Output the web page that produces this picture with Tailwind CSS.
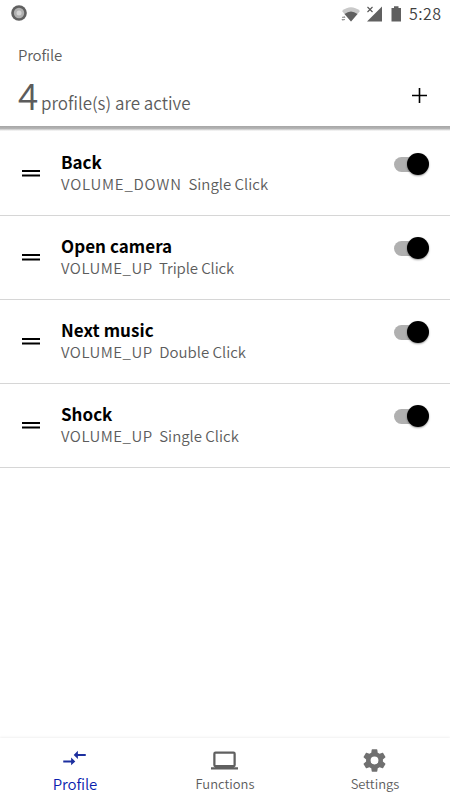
<!DOCTYPE html>
<html lang="en">
<head>
<meta charset="utf-8">
<title>Profile</title>
<script src="https://cdn.jsdelivr.net/npm/@tailwindcss/browser@4"></script>
</head>
<body class="bg-white">
<div class="flex h-[800px] w-[450px] flex-col overflow-hidden bg-white font-['Noto_Sans_CJK_SC','Noto_Sans',sans-serif] text-[#5c5c5c]">
  <div class="flex h-[27px] shrink-0 items-center justify-between pl-[11px] pr-[9px]">
    <svg class="-mt-px size-4" viewBox="0 0 16 16"><circle cx="8" cy="8" r="7.8" fill="#606060"/><circle cx="8" cy="8" r="5.2" fill="#b0b0b0"/><circle cx="8" cy="8" r="2.5" fill="#d4d4d4"/></svg>
    <div class="flex items-center">
      <svg class="h-5 w-[68px]" viewBox="0 0 68 20"><path d="M1 7Q10 -.5 19 7L10 17.500Z" fill="#c9c9c9"/><path d="M3.500 10Q10 5 16.500 10L10 17.500Z" fill="#606060"/><path d="M1 13.300h3l-1-1M4 15.600H1l1 1" fill="none" stroke="#707070" stroke-width=".8"/><path d="M41 2.500V17.500H26Z" fill="#606060"/><path d="M25 2h8v7h-8Z" fill="#fff"/><path d="m26.500 3 5 5m0-5-5 5" stroke="#555" stroke-width="1.100"/><path d="M50.500 4h2.500V2.200h4.500V4H60v13.500h-9.500Z" fill="#606060"/></svg>
      <span class="-mt-[2px] w-[32px] text-[16px] leading-[26px] font-[350] tracking-[0.500px] whitespace-nowrap text-[#404040]">5:28</span>
    </div>
  </div>
  <header class="h-[99px] shrink-0 px-[18px]">
    <h1 class="pt-[16px] text-[15px] leading-6 font-[350] -tracking-[0.150px]">Profile</h1>
    <div class="-mt-px flex items-center justify-between">
      <p class="flex items-baseline whitespace-nowrap"><span class="w-[23px] text-[37px] leading-[56px] font-[350]">4</span><span class="text-[17px] font-[350]">profile(s) are active</span></p>
      <svg class="mt-[2px] mr-[4px] size-[17px]" viewBox="0 0 17 17"><path d="M8.500 1v15M1 8.500h15" stroke="#000" stroke-width="1.600"/></svg>
    </div>
  </header>
  <div class="h-[5px] shrink-0 bg-linear-to-b from-[#a6a6a6] via-[#b4b4b4] to-white"></div>
  <main class="flex-1 pt-px">
    <section class="flex h-[84px] border-b border-[#d6d6d6] pl-[22px] pr-[20px]">
      <svg class="mt-[37px] h-[9px] w-[18px]" viewBox="0 0 18 9"><path d="M0 2h18M0 6.500h18" stroke="#000" stroke-width="2"/></svg>
      <div class="ml-[21px] flex-1 pt-[19px] whitespace-nowrap"><h2 class="text-[17px] leading-[22px] font-bold text-black">Back</h2><p class="text-[15px] leading-[22px] font-[350]"><span class="tracking-[0.800px]">VOLUME_DOWN</span>&nbsp; Single Click</p></div>
      <div class="relative mt-[21px] h-[24px] w-[36px]"><div class="mt-[4px] h-[15px] w-[30px] rounded-full bg-[#b0b0b0]"></div><div class="absolute top-0 right-[1px] size-[22px] rounded-full bg-black shadow-[0_1px_2px_#0006]"></div></div>
    </section>
    <section class="flex h-[84px] border-b border-[#d6d6d6] pl-[22px] pr-[20px]">
      <svg class="mt-[37px] h-[9px] w-[18px]" viewBox="0 0 18 9"><path d="M0 2h18M0 6.500h18" stroke="#000" stroke-width="2"/></svg>
      <div class="ml-[21px] flex-1 pt-[19px] whitespace-nowrap"><h2 class="text-[17px] leading-[22px] font-bold tracking-[0.050px] text-black">Open camera</h2><p class="text-[15px] leading-[22px] font-[350] -tracking-[0.100px]"><span class="tracking-[0.500px]">VOLUME_UP</span>&nbsp; Triple Click</p></div>
      <div class="relative mt-[21px] h-[24px] w-[36px]"><div class="mt-[4px] h-[15px] w-[30px] rounded-full bg-[#b0b0b0]"></div><div class="absolute top-0 right-[1px] size-[22px] rounded-full bg-black shadow-[0_1px_2px_#0006]"></div></div>
    </section>
    <section class="flex h-[84px] border-b border-[#d6d6d6] pl-[22px] pr-[20px]">
      <svg class="mt-[37px] h-[9px] w-[18px]" viewBox="0 0 18 9"><path d="M0 2h18M0 6.500h18" stroke="#000" stroke-width="2"/></svg>
      <div class="ml-[21px] flex-1 pt-[19px] whitespace-nowrap"><h2 class="text-[17px] leading-[22px] font-bold tracking-[0.050px] text-black">Next music</h2><p class="text-[15px] leading-[22px] font-[350]"><span class="tracking-[0.500px]">VOLUME_UP</span>&nbsp; Double Click</p></div>
      <div class="relative mt-[21px] h-[24px] w-[36px]"><div class="mt-[4px] h-[15px] w-[30px] rounded-full bg-[#b0b0b0]"></div><div class="absolute top-0 right-[1px] size-[22px] rounded-full bg-black shadow-[0_1px_2px_#0006]"></div></div>
    </section>
    <section class="flex h-[84px] border-b border-[#d6d6d6] pl-[22px] pr-[20px]">
      <svg class="mt-[37px] h-[9px] w-[18px]" viewBox="0 0 18 9"><path d="M0 2h18M0 6.500h18" stroke="#000" stroke-width="2"/></svg>
      <div class="ml-[21px] flex-1 pt-[19px] whitespace-nowrap"><h2 class="text-[17px] leading-[22px] font-bold text-black">Shock</h2><p class="text-[15px] leading-[22px] font-[350]"><span class="tracking-[0.500px]">VOLUME_UP</span>&nbsp; Single Click</p></div>
      <div class="relative mt-[21px] h-[24px] w-[36px]"><div class="mt-[4px] h-[15px] w-[30px] rounded-full bg-[#b0b0b0]"></div><div class="absolute top-0 right-[1px] size-[22px] rounded-full bg-black shadow-[0_1px_2px_#0006]"></div></div>
    </section>
  </main>
  <nav class="grid h-[62px] shrink-0 grid-cols-3 shadow-[0_-1px_2px_#0000000f]">
    <a class="flex flex-col items-center pt-[7px] text-[#1c2f9f]">
      <svg class="mr-px size-[27px] shrink-0" viewBox="0 0 24 24" fill="currentColor"><path d="M9 13.700H2v1.900h7v2.400l3.700-3.400L9 11.200v2.500Zm6-1.200v-2.700h7V7.900h-7V5.200l-3.700 3.600 3.700 3.700Z"/></svg>
      <span class="text-[15px] leading-[23px] font-[350] text-[#0a1fae] -tracking-[0.100px]">Profile</span>
    </a>
    <a class="flex flex-col items-center pt-[9px]">
      <svg class="mr-px size-[27px] shrink-0" viewBox="0 0 24 24" fill="#606060"><path d="M20 18a2 2 0 0 0 2-2V6a2 2 0 0 0-2-2H4a2 2 0 0 0-2 2v10a2 2 0 0 0 2 2H0v2h24v-2ZM4 6h16v10H4Z"/></svg>
      <span class="text-[13px] leading-[20px] font-[350]">Functions</span>
    </a>
    <a class="flex flex-col items-center pt-[9px]">
      <svg class="mr-px size-[27px] shrink-0" viewBox="0 0 24 24" fill="#707070"><path d="M19.430 12.980c.04-.32.070-.64.070-.98s-.03-.66-.07-.98l2.110-1.650c.19-.15.240-.42.120-.64l-2-3.460c-.12-.22-.39-.3-.61-.22l-2.490 1c-.52-.4-1.080-.73-1.690-.98l-.38-2.650C14.460 2.180 14.250 2 14 2h-4c-.25 0-.46.180-.49.420l-.38 2.650c-.61.250-1.170.590-1.690.980l-2.490-1c-.23-.09-.49 0-.61.220l-2 3.460c-.13.220-.07.490.120.640l2.110 1.650c-.04.320-.07.650-.07.980s.03.660.070.980l-2.110 1.650c-.19.150-.24.420-.12.640l2 3.460c.12.220.390.300.610.220l2.490-1c.52.400 1.080.730 1.690.980l.38 2.650c.03.240.240.420.490.420h4c.25 0 .46-.18.490-.42l.38-2.650c.61-.25 1.170-.59 1.690-.98l2.490 1c.23.090.490 0 .61-.22l2-3.460c.12-.22.070-.49-.12-.64ZM12 15.500a3.500 3.500 0 1 1 0-7 3.500 3.500 0 0 1 0 7Z"/></svg>
      <span class="text-[13px] leading-[20px] font-[350]">Settings</span>
    </a>
  </nav>
</div>
</body>
</html>
